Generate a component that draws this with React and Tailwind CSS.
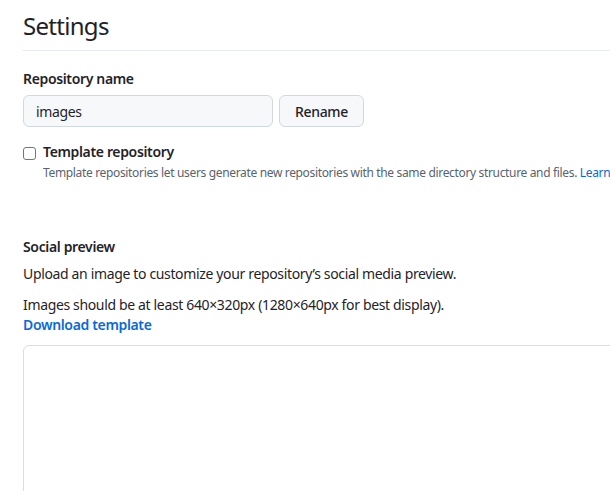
export default function App() {
  return (
    <div className="h-[491px] w-[610px] overflow-hidden bg-white" style={{ fontFamily: '"Noto Sans", sans-serif' }}>
      <div className="w-[900px] pl-[23px] text-[#1f2328] tracking-[-0.35px]">
        <div className="flex h-[51px] items-center border-b border-[#d8dee4]/60 pt-[2px]">
          <h1 className="text-[24px] font-normal leading-[30px] tracking-[-0.7px]">Settings</h1>
        </div>

        <div className="mt-[18px]">
          <label className="block text-[14px] font-semibold leading-[20px]">Repository name</label>
          <div className="mt-[6px] flex gap-[6px]">
            <div className="flex h-[32px] w-[250px] items-center rounded-[6px] border border-[#d1d9e0] bg-[#f6f8fa] px-[12px] text-[14px]">
              images
            </div>
            <button className="h-[32px] w-[85px] rounded-[6px] border border-[#d1d9e0] bg-[#f6f8fa] text-[14px] font-medium">
              Rename
            </button>
          </div>
        </div>

        <div className="mt-[18px] flex gap-[7px]">
          <span className="mt-[2px] block h-[13px] w-[13px] rounded-[3px] border border-[#767676]" />
          <div>
            <div className="text-[14px] font-semibold leading-[14px]">Template repository</div>
            <p className="mt-[5px] whitespace-nowrap text-[12px] leading-[18px] tracking-[-0.34px] text-[#59636e]">
              Template repositories let users generate new repositories with the same directory structure and files.{' '}
              <span className="text-[#0969da]">Learn more about template repositories</span>.
            </p>
          </div>
        </div>

        <div className="mt-[55px]">
          <h2 className="text-[14px] font-semibold leading-[20px]">Social preview</h2>
          <p className="mt-[6px] text-[14px] leading-[21px]">Upload an image to customize your repository’s social media preview.</p>
          <p className="mt-[10px] text-[14px] leading-[21px]">Images should be at least 640×320px (1280×640px for best display).</p>
          <a className="block text-[14px] font-semibold leading-[20px] text-[#0969da]">Download template</a>
          <div className="mt-[10px] h-[300px] w-[640px] rounded-[6px] border border-[#d8dee4]" />
        </div>
      </div>
    </div>
  )
}
